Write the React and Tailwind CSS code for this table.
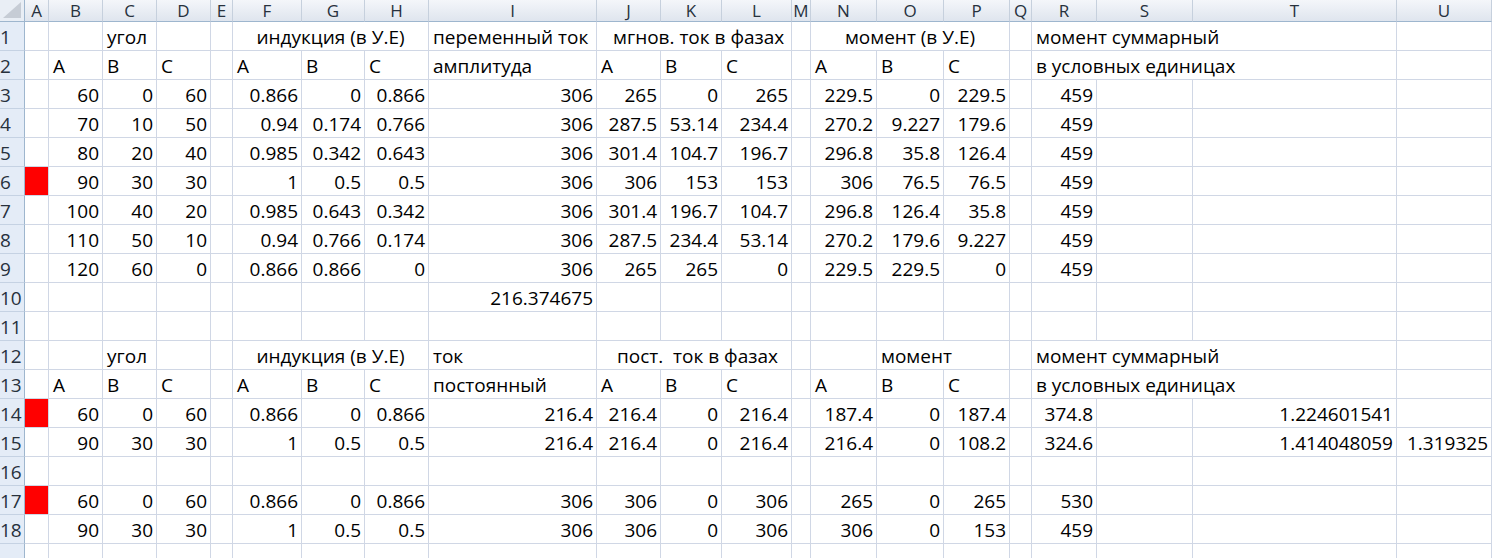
import React from "react";

const COLS =
  "grid grid-cols-[25px_24px_54px_54px_54px_22px_69px_63px_64px_168px_64px_61px_70px_19px_66px_67px_66px_22px_65px_96px_204px_1fr]";

const LETTERS = "ABCDEFGHIJKLMNOPQRSTU".split("");

const E = { t: "" };
const N = (t) => ({ t: String(t), a: "r" });
const L = (t) => ({ t, a: "l" });

const numRow = (vals, extra = {}) => {
  const [b, c, d, f, g, h, i, j, k, l, n, o, p, r] = vals;
  return [
    extra.red ? { t: "", red: true } : E,
    N(b), N(c), N(d), E,
    N(f), N(g), N(h),
    N(i),
    N(j), N(k), N(l), E,
    N(n), N(o), N(p), E,
    N(r),
    E,
    extra.t ? N(extra.t) : E,
    extra.u ? N(extra.u) : E,
  ];
};

const headRow1 = (second) => [
  E, E, L("угол"), E, E,
  { t: "индукция (в У.Е)", a: "c", s: 3 },
  L(second ? "ток" : "переменный ток"),
  second
    ? { t: "пост.  ток в фазах", a: "l", s: 3, cls: "pl-[20px]" }
    : { t: "мгнов. ток в фазах", a: "l", s: 3, cls: "pl-[16px]" },
  E,
  second ? E : { t: "момент (в У.Е)", a: "c", s: 3 },
  ...(second ? [{ t: "момент", a: "l", s: 2 }] : []),
  E,
  { t: "момент суммарный", a: "l", s: 3 },
  E,
];

const headRow2 = (second) => [
  E, L("A"), L("B"), L("C"), E,
  L("A"), L("B"), L("C"),
  L(second ? "постоянный" : "амплитуда"),
  L("A"), L("B"), L("C"), E,
  L("A"), L("B"), L("C"), E,
  { t: "в условных единицах", a: "l", s: 3 },
  E,
];

const empty = () => Array.from({ length: 21 }, () => E);

const row10 = empty();
row10[8] = N("216.374675");

const ROWS = [
  headRow1(false),
  headRow2(false),
  numRow([60, 0, 60, 0.866, 0, 0.866, 306, 265, 0, 265, 229.5, 0, 229.5, 459]),
  numRow([70, 10, 50, 0.94, 0.174, 0.766, 306, 287.5, 53.14, 234.4, 270.2, 9.227, 179.6, 459]),
  numRow([80, 20, 40, 0.985, 0.342, 0.643, 306, 301.4, 104.7, 196.7, 296.8, 35.8, 126.4, 459]),
  numRow([90, 30, 30, 1, 0.5, 0.5, 306, 306, 153, 153, 306, 76.5, 76.5, 459], { red: true }),
  numRow([100, 40, 20, 0.985, 0.643, 0.342, 306, 301.4, 196.7, 104.7, 296.8, 126.4, 35.8, 459]),
  numRow([110, 50, 10, 0.94, 0.766, 0.174, 306, 287.5, 234.4, 53.14, 270.2, 179.6, 9.227, 459]),
  numRow([120, 60, 0, 0.866, 0.866, 0, 306, 265, 265, 0, 229.5, 229.5, 0, 459]),
  row10,
  empty(),
  headRow1(true),
  headRow2(true),
  numRow([60, 0, 60, 0.866, 0, 0.866, 216.4, 216.4, 0, 216.4, 187.4, 0, 187.4, 374.8], { red: true, t: "1.224601541" }),
  numRow([90, 30, 30, 1, 0.5, 0.5, 216.4, 216.4, 0, 216.4, 216.4, 0, 108.2, 324.6], { t: "1.414048059", u: "1.319325" }),
  empty(),
  numRow([60, 0, 60, 0.866, 0, 0.866, 306, 306, 0, 306, 265, 0, 265, 530], { red: true }),
  numRow([90, 30, 30, 1, 0.5, 0.5, 306, 306, 0, 306, 306, 0, 153, 459]),
  empty(),
];

function Cell({ c }) {
  const span = c.s === 3 ? "col-span-3" : c.s === 2 ? "col-span-2" : "";
  const align =
    c.a === "r"
      ? "justify-end pr-[3px]"
      : c.a === "c"
      ? "justify-center"
      : "justify-start pl-[4px]";
  return (
    <div
      className={`${span} ${align} ${c.cls || ""} ${
        c.red ? "bg-[#ff0000]" : "bg-white"
      } flex items-end pb-[2px] leading-[22px] border-r border-b border-[#d0d7e5] whitespace-pre overflow-visible`}
    >
      {c.t}
    </div>
  );
}

export default function App() {
  return (
    <div className="w-[1492px] h-[558px] overflow-hidden bg-white text-black font-['Open_Sans',sans-serif] text-[19px]">
      <div className={`${COLS} h-[22px]`}>
        <div className="relative bg-[#e9eef5] border-r border-b border-[#9eb6ce]">
          <svg className="absolute right-[2px] bottom-[2px]" width="20" height="17" viewBox="0 0 20 17">
            <polygon points="19,0 19,16 1,16" fill="#c6ccd5" />
          </svg>
        </div>
        {LETTERS.map((l) => (
          <div
            key={l}
            className="flex items-center justify-center bg-gradient-to-b from-[#f4f6fa] to-[#dfe5ee] border-r border-b border-r-[#c6d0dd] border-b-[#9eb6ce] text-[#27313d] text-[17px] leading-[21px]"
          >
            {l}
          </div>
        ))}
      </div>
      {ROWS.map((row, i) => (
        <div key={i} className={`${COLS} h-[29px]`}>
          <div className="flex items-end pb-[2px] leading-[22px] pl-0 bg-[#e4ecf7] border-r border-b border-r-[#9eb6ce] border-b-[#c5d2e3] text-[#27313d]">
            {i < 18 ? i + 1 : ""}
          </div>
          {row.map((c, j) => (
            <Cell key={j} c={c} />
          ))}
        </div>
      ))}
    </div>
  );
}
